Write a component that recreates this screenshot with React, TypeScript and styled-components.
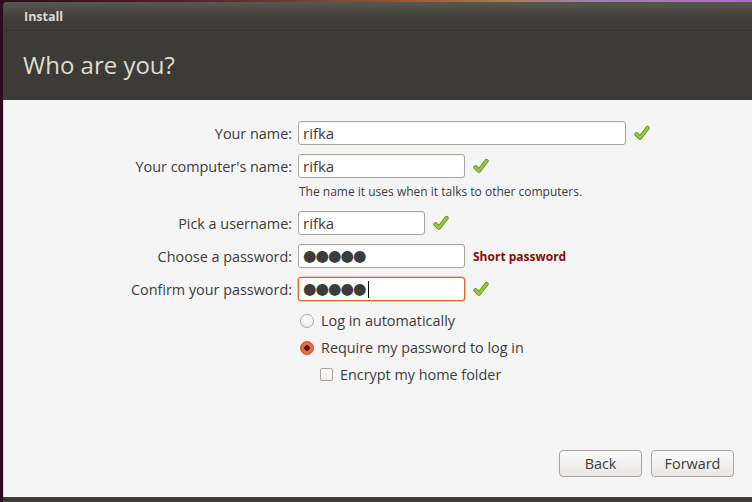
import styled, { createGlobalStyle } from 'styled-components';

const GlobalStyle = createGlobalStyle`
    html, body {
        margin: 0;
        padding: 0;
        background: #2c0b1f;
    }
`;

const FONT = `'Open Sans', 'DejaVu Sans', sans-serif`;

function Check() {
    return (
        <CheckIcon viewBox="0 0 16 16" width="16" height="16">
            <path
                d="M2.5 9.2 L6 12.8 L13.5 3"
                fill="none"
                stroke="#6b8f23"
                strokeWidth="4.2"
                strokeLinecap="round"
                strokeLinejoin="round"
            />
            <path
                d="M2.5 9.2 L6 12.8 L13.5 3"
                fill="none"
                stroke="#9cc54a"
                strokeWidth="2.4"
                strokeLinecap="round"
                strokeLinejoin="round"
            />
        </CheckIcon>
    );
}

export default function App() {
    return (
        <>
            <GlobalStyle />
            <Desktop>
                <Window>
                    <TitleBar>Install</TitleBar>
                    <Header>Who are you?</Header>
                    <Content>
                        <Form>
                            <Field>
                                <Label>Your name:</Label>
                                <Control>
                                    <TextBox $width={328}>rifka</TextBox>
                                    <Check />
                                </Control>
                            </Field>
                            <Field>
                                <Label>Your computer's name:</Label>
                                <Control>
                                    <TextBox $width={167}>rifka</TextBox>
                                    <Check />
                                </Control>
                            </Field>
                            <Hint>The name it uses when it talks to other computers.</Hint>
                            <Field $gap={11}>
                                <Label>Pick a username:</Label>
                                <Control>
                                    <TextBox $width={127}>rifka</TextBox>
                                    <Check />
                                </Control>
                            </Field>
                            <Field>
                                <Label>Choose a password:</Label>
                                <Control>
                                    <TextBox $width={167}>
                                        <Dots>●●●●●</Dots>
                                    </TextBox>
                                    <Warning>Short password</Warning>
                                </Control>
                            </Field>
                            <Field>
                                <Label>Confirm your password:</Label>
                                <Control>
                                    <TextBox $width={167} $focused>
                                        <Dots>●●●●●</Dots>
                                        <Caret />
                                    </TextBox>
                                    <Check />
                                </Control>
                            </Field>
                        </Form>

                        <Options>
                            <Option>
                                <Radio />
                                Log in automatically
                            </Option>
                            <Option>
                                <Radio $checked />
                                Require my password to log in
                            </Option>
                            <Option $indent>
                                <CheckBox />
                                Encrypt my home folder
                            </Option>
                        </Options>

                        <ButtonBar>
                            <Button>Back</Button>
                            <Button>Forward</Button>
                        </ButtonBar>
                    </Content>
                    <BottomEdge />
                </Window>
            </Desktop>
        </>
    );
}

const Desktop = styled.div`
    width: 752px;
    height: 502px;
    overflow: hidden;
    padding: 2px 0 0 3px;
    box-sizing: border-box;
    background: linear-gradient(90deg, #2e0c20 0%, #5a1c2c 25%, #a0583c 55%, #b07448 66%, #9a82b4 78%, #b866cc 100%);
    font-family: ${FONT};
`;

const Window = styled.div`
    display: flex;
    flex-direction: column;
    height: 500px;
    background: #3c3b37;
    border-top-left-radius: 4px;
    overflow: hidden;
`;

const TitleBar = styled.div`
    height: 28px;
    display: flex;
    align-items: center;
    padding-left: 21px;
    background: linear-gradient(#57564f, #3e3d39 60%, #3c3b37);
    border-bottom: 1px solid #34332f;
    color: #dfdbd2;
    font-size: 12.5px;
    font-weight: 700;
`;

const Header = styled.div`
    height: 69px;
    display: flex;
    align-items: center;
    padding-left: 20px;
    color: #dfdbd2;
    font-size: 24px;
    padding-bottom: 2px;
    box-sizing: border-box;
`;

const Content = styled.div`
    flex: 1;
    display: flex;
    flex-direction: column;
    background: #f5f5f5;
    border-left: 1px solid #d8d8d8;
    padding: 21px 18px 20px 0;
    color: #3c3c3c;
`;

const Form = styled.div`
    display: flex;
    flex-direction: column;
`;

const Field = styled.div<{ $gap?: number }>`
    display: grid;
    grid-template-columns: 294px 1fr;
    align-items: center;
    margin-top: ${(p) => p.$gap ?? 9}px;

    &:first-child {
        margin-top: 0;
    }
`;

const Label = styled.div`
    text-align: right;
    padding-right: 6px;
    font-size: 14.4px;
    color: #3c3c3c;
`;

const Control = styled.div`
    display: flex;
    align-items: center;
    gap: 8px;
`;

const TextBox = styled.div<{ $width: number; $focused?: boolean }>`
    width: ${(p) => p.$width}px;
    height: 24px;
    box-sizing: border-box;
    display: flex;
    align-items: center;
    padding-left: 4px;
    background: #ffffff;
    border: 1px solid ${(p) => (p.$focused ? '#e0642f' : '#aaa59e')};
    border-radius: 3px;
    box-shadow: ${(p) => (p.$focused ? '0 0 0 0.5px #f09070' : 'inset 0 1px 1px rgba(0,0,0,0.06)')};
    font-size: 15px;
    color: #3c3c3c;
`;

const Dots = styled.span`
    font-family: 'DejaVu Sans', sans-serif;
    font-size: 15.5px;
    letter-spacing: -1px;
    color: #3c3c3c;
`;

const Caret = styled.span`
    width: 1px;
    height: 17px;
    margin-left: 2px;
    background: #000;
`;

const CheckIcon = styled.svg`
    display: block;
`;

const Hint = styled.div`
    margin: 5px 0 0 295px;
    font-size: 12px;
    color: #3c3c3c;
`;

const Warning = styled.span`
    font-size: 12px;
    font-weight: 700;
    color: #8a0c0c;
`;

const Options = styled.div`
    display: flex;
    flex-direction: column;
    gap: 10px;
    margin: 11px 0 0 296px;
`;

const Option = styled.label<{ $indent?: boolean }>`
    display: flex;
    align-items: center;
    gap: 7px;
    height: 17px;
    margin-left: ${(p) => (p.$indent ? 20 : 0)}px;
    font-size: 14.4px;
    color: #3c3c3c;
`;

const Radio = styled.span<{ $checked?: boolean }>`
    width: 14px;
    height: 14px;
    box-sizing: border-box;
    border-radius: 50%;
    border: 1px solid ${(p) => (p.$checked ? '#c2532c' : '#a9a49d')};
    background: ${(p) =>
        p.$checked
            ? 'radial-gradient(circle, #4a1c10 0 2.5px, #e9693c 3px)'
            : 'linear-gradient(#ffffff, #ececec)'};
`;

const CheckBox = styled.span`
    width: 13px;
    height: 13px;
    box-sizing: border-box;
    border: 1px solid #a9a49d;
    border-radius: 2px;
    background: linear-gradient(#ffffff, #eeeeee);
`;

const ButtonBar = styled.div`
    margin-top: auto;
    display: flex;
    justify-content: flex-end;
    gap: 9px;
`;

const Button = styled.button`
    width: 83px;
    height: 27px;
    border: 1px solid #aaa5a0;
    border-radius: 4px;
    background: linear-gradient(#fbfbfb, #e9e8e6);
    box-shadow: inset 0 1px 0 #ffffff;
    font-family: ${FONT};
    font-size: 14.4px;
    color: #3c3c3c;
    padding: 0;
`;

const BottomEdge = styled.div`
    height: 5px;
    background: #3c3b37;
`;
